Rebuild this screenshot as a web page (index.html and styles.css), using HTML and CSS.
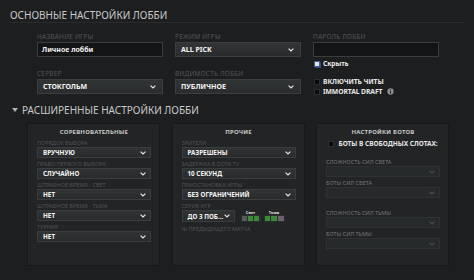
FILE: index.html
```html
<!DOCTYPE html>
<html lang="ru">
<head>
<meta charset="utf-8">
<title>Lobby</title>
<link rel="stylesheet" href="styles.css">
</head>
<body>
<div class="page">
  <h1 class="title">ОСНОВНЫЕ НАСТРОЙКИ ЛОББИ</h1>

  <div class="basic">
    <div class="col">
      <div class="lbl">НАЗВАНИЕ ИГРЫ</div>
      <div class="input"><span class="val">Личное лобби</span></div>
      <div class="lbl next">СЕРВЕР</div>
      <div class="select"><span>СТОКГОЛЬМ</span><svg class="chev" viewBox="0 0 6 4"><polyline points="0.6,0.6 3,3 5.4,0.6"/></svg></div>
    </div>
    <div class="col">
      <div class="lbl">РЕЖИМ ИГРЫ</div>
      <div class="select"><span>ALL PICK</span><svg class="chev" viewBox="0 0 6 4"><polyline points="0.6,0.6 3,3 5.4,0.6"/></svg></div>
      <div class="lbl next">ВИДИМОСТЬ ЛОББИ</div>
      <div class="select"><span>ПУБЛИЧНОЕ</span><svg class="chev" viewBox="0 0 6 4"><polyline points="0.6,0.6 3,3 5.4,0.6"/></svg></div>
    </div>
    <div class="col">
      <div class="lbl">ПАРОЛЬ ЛОББИ</div>
      <div class="input"></div>
      <div class="check hide"><span class="box on"></span><span>Скрыть</span></div>
      <div class="check cheats"><span class="box"></span><span>ВКЛЮЧИТЬ ЧИТЫ</span></div>
      <div class="check"><span class="box"></span><span>IMMORTAL DRAFT</span>
        <svg class="info" viewBox="0 0 8 8"><circle cx="4" cy="4" r="3.6"/><rect x="3.4" y="1.6" width="1.2" height="1.1" class="ib"/><rect x="3.4" y="3.2" width="1.2" height="3.2" class="ib"/></svg>
      </div>
    </div>
  </div>

  <div class="adv"><span class="tri"></span>РАСШИРЕННЫЕ НАСТРОЙКИ ЛОББИ</div>

  <div class="panels">
    <div class="panel">
      <div class="ptitle">СОРЕВНОВАТЕЛЬНЫЕ</div>
      <div class="plbl">ПОРЯДОК ВЫБОРА</div>
      <div class="pselect"><span>ВРУЧНУЮ</span><svg class="chev" viewBox="0 0 6 4"><polyline points="0.6,0.6 3,3 5.4,0.6"/></svg></div>
      <div class="plbl">ПРАВО ПЕРВОГО ВЫБОРА</div>
      <div class="pselect"><span>СЛУЧАЙНО</span><svg class="chev" viewBox="0 0 6 4"><polyline points="0.6,0.6 3,3 5.4,0.6"/></svg></div>
      <div class="plbl">ШТРАФНОЕ ВРЕМЯ - СВЕТ</div>
      <div class="pselect"><span>НЕТ</span><svg class="chev" viewBox="0 0 6 4"><polyline points="0.6,0.6 3,3 5.4,0.6"/></svg></div>
      <div class="plbl">ШТРАФНОЕ ВРЕМЯ - ТЬМА</div>
      <div class="pselect"><span>НЕТ</span><svg class="chev" viewBox="0 0 6 4"><polyline points="0.6,0.6 3,3 5.4,0.6"/></svg></div>
      <div class="plbl">ТУРНИР</div>
      <div class="pselect"><span>НЕТ</span><svg class="chev" viewBox="0 0 6 4"><polyline points="0.6,0.6 3,3 5.4,0.6"/></svg></div>
    </div>

    <div class="panel">
      <div class="ptitle">ПРОЧИЕ</div>
      <div class="plbl">ЗРИТЕЛИ</div>
      <div class="pselect"><span>РАЗРЕШЕНЫ</span><svg class="chev" viewBox="0 0 6 4"><polyline points="0.6,0.6 3,3 5.4,0.6"/></svg></div>
      <div class="plbl">ЗАДЕРЖКА В DOTA TV</div>
      <div class="pselect"><span>10 СЕКУНД</span><svg class="chev" viewBox="0 0 6 4"><polyline points="0.6,0.6 3,3 5.4,0.6"/></svg></div>
      <div class="plbl">ПРИОСТАНОВКА ИГРЫ</div>
      <div class="pselect"><span>БЕЗ ОГРАНИЧЕНИЙ</span><svg class="chev" viewBox="0 0 6 4"><polyline points="0.6,0.6 3,3 5.4,0.6"/></svg></div>
      <div class="plbl">СЕРИЯ ИГР</div>
      <div class="series">
        <div class="pselect mini"><span>ДО 3 ПОБ...</span><svg class="chev" viewBox="0 0 6 4"><polyline points="0.6,0.6 3,3 5.4,0.6"/></svg></div>
        <div class="score s1">
          <div class="slbl">Свет</div>
          <div class="sbox"><span class="sq gray"></span><span class="sq green"></span><span class="sq green"></span></div>
        </div>
        <div class="score s2">
          <div class="slbl">Тьма</div>
          <div class="sbox"><span class="sq green"></span><span class="sq green"></span><span class="sq pink"></span></div>
        </div>
      </div>
      <div class="plbl prev">№ ПРЕДЫДУЩЕГО МАТЧА</div>
    </div>

    <div class="panel">
      <div class="ptitle">НАСТРОЙКИ БОТОВ</div>
      <div class="pcheck"><span class="box"></span><span>БОТЫ В СВОБОДНЫХ СЛОТАХ:</span></div>
      <div class="plbl light">СЛОЖНОСТЬ СИЛ СВЕТА</div>
      <div class="pselect off"><span></span><svg class="chev" viewBox="0 0 6 4"><polyline points="0.6,0.6 3,3 5.4,0.6"/></svg></div>
      <div class="plbl light">БОТЫ СИЛ СВЕТА</div>
      <div class="pselect off"><span></span><svg class="chev" viewBox="0 0 6 4"><polyline points="0.6,0.6 3,3 5.4,0.6"/></svg></div>
      <div class="plbl light group">СЛОЖНОСТЬ СИЛ ТЬМЫ</div>
      <div class="pselect off"><span></span><svg class="chev" viewBox="0 0 6 4"><polyline points="0.6,0.6 3,3 5.4,0.6"/></svg></div>
      <div class="plbl light">БОТЫ СИЛ ТЬМЫ</div>
      <div class="pselect off"><span></span><svg class="chev" viewBox="0 0 6 4"><polyline points="0.6,0.6 3,3 5.4,0.6"/></svg></div>
    </div>
  </div>
</div>
</body>
</html>
```

FILE: styles.css
```css
* { box-sizing: border-box; margin: 0; padding: 0; }
html, body { width: 474px; height: 280px; overflow: hidden; }
body {
  background: #1d1e20;
  font-family: "Noto Sans", "Open Sans", sans-serif;
  color: #fff;
}
.page { padding-top: 8px; }

.title {
  margin-left: 10px;
  width: 453px;
  font-size: 10px;
  line-height: 14px;
  font-weight: 400;
  color: #c9c9c9;
  letter-spacing: 0;
  border-bottom: 1px solid #2a2b2d;
}

.basic {
  display: flex;
  gap: 12px;
  padding-left: 37px;
  margin-top: 10px;
}
.col { width: 126px; display: flex; flex-direction: column; }
.lbl {
  font-size: 6.5px;
  line-height: 8px;
  color: #53575a;
  letter-spacing: 0.2px;
  margin-bottom: 1px;
  white-space: nowrap;
}
.lbl.next { margin-top: 13px; }

.input {
  height: 15px;
  background: #131415;
  border: 1px solid #3a3c3e;
  display: flex;
  align-items: center;
  padding-left: 4px;
  font-size: 7px;
  font-weight: 700;
  color: #f2f2f2;
}
.select {
  height: 15px;
  background: linear-gradient(#313435, #2a2c2d);
  border: 1px solid #3b3e40;
  display: flex;
  align-items: center;
  justify-content: space-between;
  padding: 0 6px 0 5px;
  font-size: 7px;
  font-weight: 700;
  color: #f4f4f4;
}
.chev { width: 6px; height: 4px; flex: none; }
.chev polyline { fill: none; stroke: #e6e6e6; stroke-width: 1.2; }

.check {
  display: flex;
  align-items: center;
  gap: 3px;
  height: 7px;
  margin-left: 1px;
  font-size: 6.8px;
  font-weight: 700;
  letter-spacing: -0.1px;
  color: #e6e6e6;
  margin-top: 3px;
}
.check.cheats { margin-top: 11px; }
.box {
  width: 6px;
  height: 6px;
  flex: none;
  background: #0a0a0b;
  border: 1px solid #2c2e30;
}
.box.on {
  background: #dde6f0;
  border-color: #3d5f93;
  box-shadow: 0 0 1px 0.5px #2e4f80;
}
.info { width: 7px; height: 7px; margin-left: 2px; }
.info circle { fill: #8b8d90; }
.info .ib { fill: #2a2c2e; }

.adv {
  display: flex;
  align-items: center;
  margin-top: 8px;
  padding-left: 12px;
  font-size: 10px;
  line-height: 14px;
  color: #c9c9c9;
  letter-spacing: 0;
}
.tri {
  width: 0;
  height: 0;
  border-left: 3px solid transparent;
  border-right: 3px solid transparent;
  border-top: 4px solid #b0b0b0;
  margin-right: 4px;
}

.panels {
  display: flex;
  gap: 11.5px;
  padding-left: 27px;
  margin-top: 6px;
}
.panel {
  width: 133px;
  height: 143px;
  background: #222426;
  border: 1px solid #17181a;
  padding: 4px 8px 0 9px;
  display: flex;
  flex-direction: column;
}
.ptitle {
  font-size: 6px;
  line-height: 8px;
  font-weight: 700;
  text-align: center;
  color: #c4c4c4;
  letter-spacing: 0.2px;
  margin-bottom: 4px;
}
.plbl {
  font-size: 5.5px;
  line-height: 6px;
  color: #505457;
  margin-bottom: 1px;
  white-space: nowrap;
}
.plbl.light { color: #75797c; }
.plbl.group { margin-top: 9px; }
.plbl.prev { margin-top: 4px; }
.pselect {
  height: 11px;
  margin-bottom: 3px;
  background: linear-gradient(#303334, #292b2c);
  border: 1px solid #3a3d3f;
  display: flex;
  align-items: center;
  justify-content: space-between;
  padding: 0 4px 0 5px;
  font-size: 6.3px;
  font-weight: 700;
  color: #f2f2f2;
  white-space: nowrap;
}
.pselect.off {
  background: #272a2b;
  border-color: #2f3234;
}
.pselect.off .chev polyline { stroke: #4b4e51; }

.series { display: flex; align-items: flex-end; }
.pselect.mini { width: 53px; height: 12px; margin-bottom: 0; margin-right: 6px; }
.score { display: flex; flex-direction: column; align-items: center; width: 20px; }
.score.s2 { margin-left: 3px; width: 21px; }
.slbl {
  font-size: 4px;
  line-height: 5px;
  font-weight: 700;
  color: #e0e0e0;
}
.sbox {
  width: 100%;
  height: 7px;
  background: #2b2e30;
  display: flex;
  gap: 1px;
  padding: 1px;
}
.sq { flex: 1; }
.sq.gray { background: #585b5e; }
.sq.green { background: #3b8a3c; }
.sq.pink { background: #6e5f6e; }

.pcheck {
  display: flex;
  align-items: center;
  justify-content: center;
  gap: 4px;
  height: 7px;
  font-size: 6.5px;
  font-weight: 700;
  color: #e6e6e6;
  margin-bottom: 12px;
  white-space: nowrap;
}
```
